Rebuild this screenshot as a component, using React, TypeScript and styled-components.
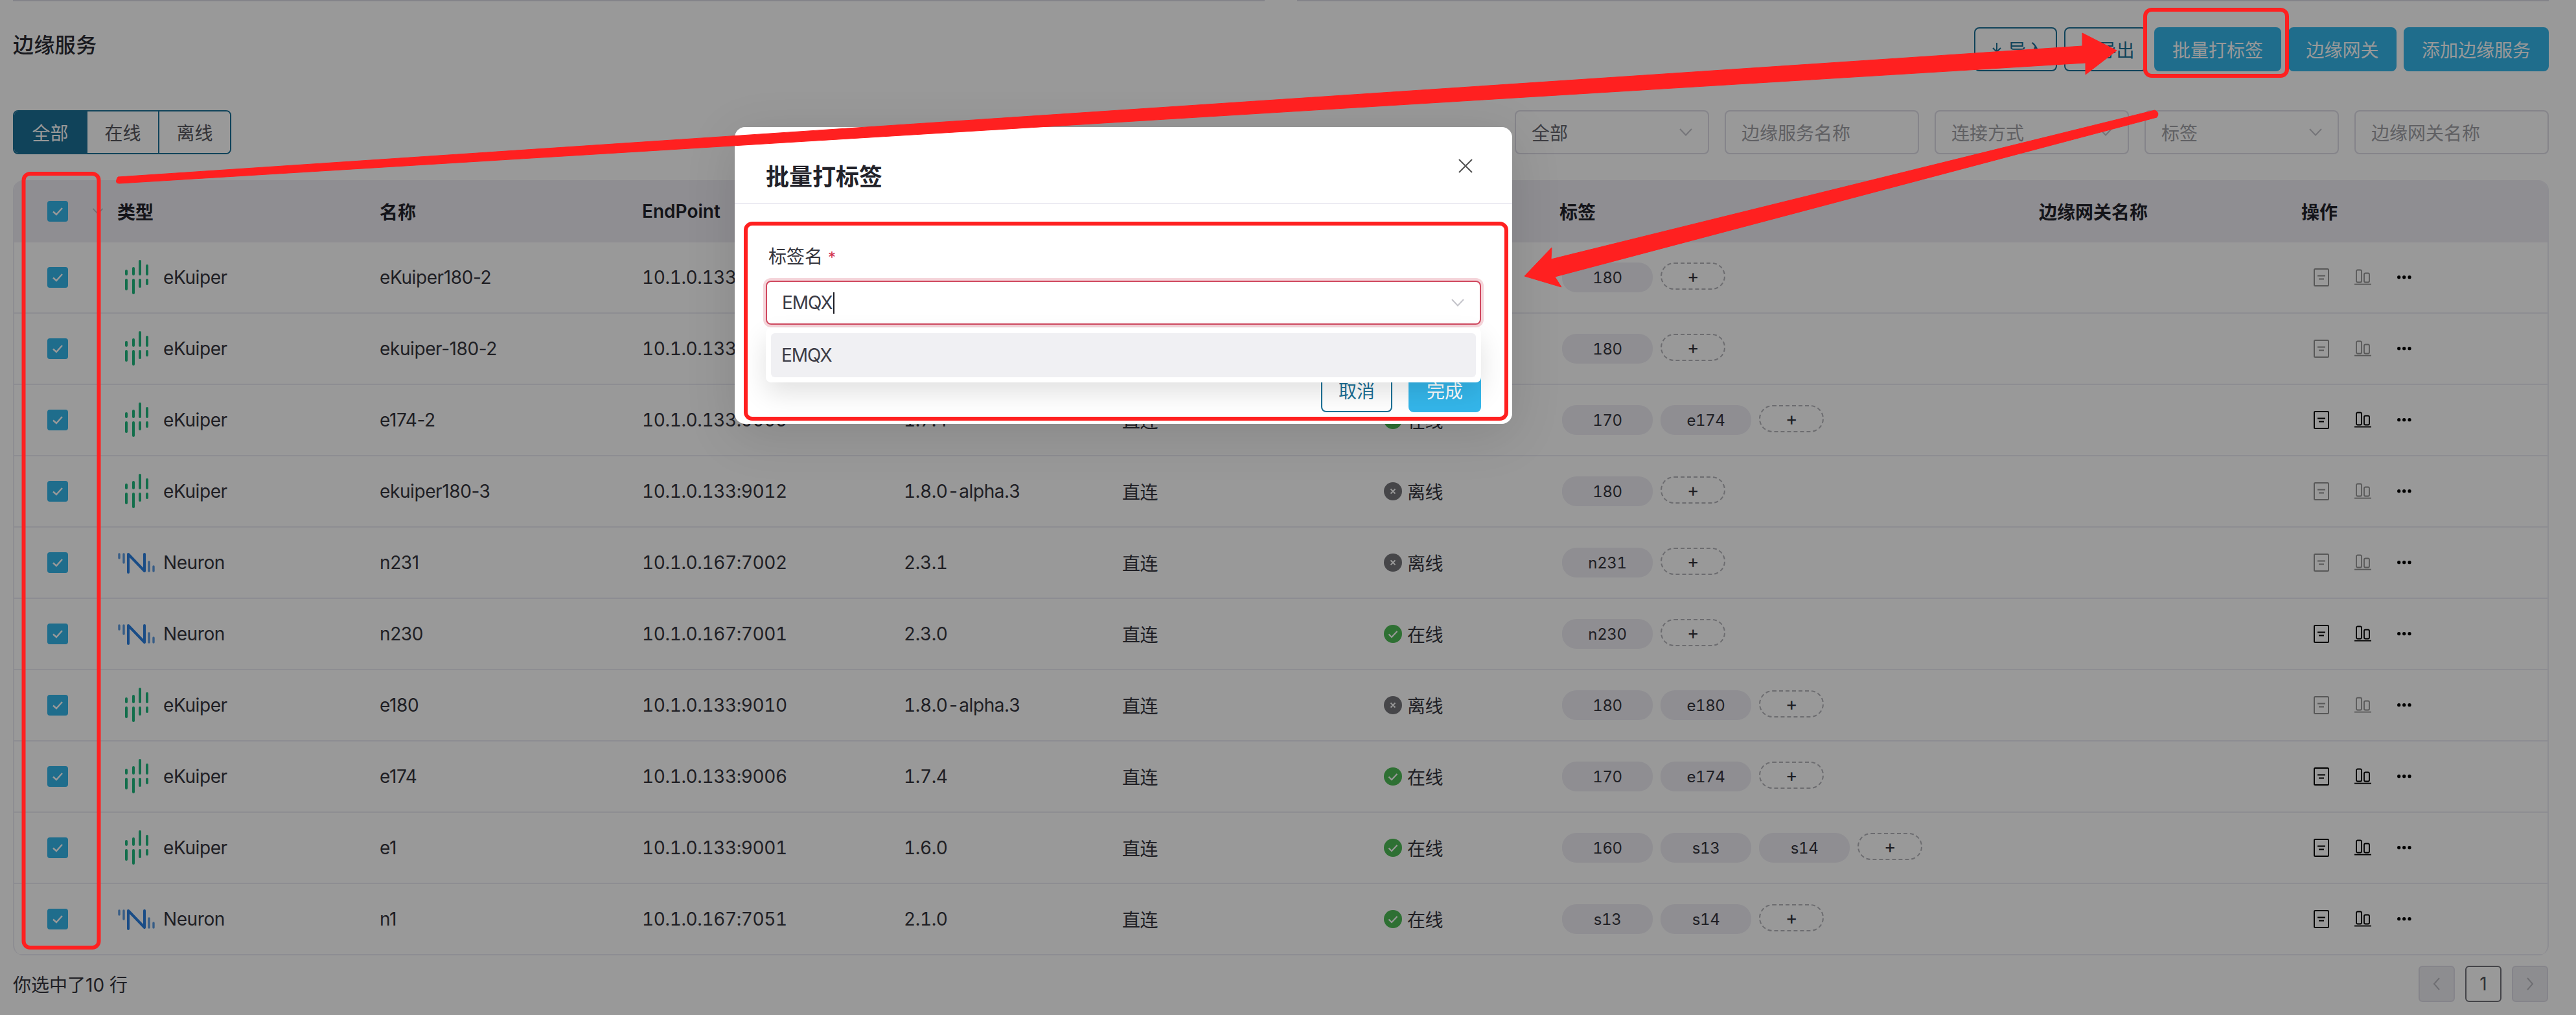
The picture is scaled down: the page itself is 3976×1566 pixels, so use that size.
import { ReactElement } from 'react';
import styled, { createGlobalStyle } from 'styled-components';

const GlobalStyle = createGlobalStyle`
  html, body {
    margin: 0;
    padding: 0;
    background: #fff;
    overflow: hidden;
  }
  body, button, input {
    font-family: Inter, "Noto Sans CJK SC", sans-serif;
  }
`;

const Page = styled.div`
  position: relative;
  box-sizing: border-box;
  width: 3976px;
  height: 1566px;
  padding: 0 42px 0 20px;
  font-size: 28px;
  color: #35353d;
  overflow: hidden;
`;

const TopCards = styled.div`
  display: flex;
  gap: 50px;
  height: 2px;
`;

const TopCard = styled.div`
  flex: 1;
  background: #ddddE4;
`;

const HeaderBar = styled.div`
  display: flex;
  justify-content: space-between;
  align-items: center;
  height: 68px;
  margin-top: 40px;
`;

const Title = styled.div`
  font-size: 32px;
  font-weight: 500;
  color: #2b2b33;
  margin-top: -18px;
  letter-spacing: 0.4px;
`;

const Toolbar = styled.div`
  display: flex;
  gap: 11px;
`;

const Button = styled.button<{ $outline?: boolean; $width: number }>`
  box-sizing: border-box;
  width: ${(p) => p.$width}px;
  height: 68px;
  padding: 0;
  font-size: 28px;
  border-radius: 8px;
  border: 2px solid ${(p) => (p.$outline ? '#1b7096' : '#34b6ea')};
  background: ${(p) => (p.$outline ? '#fff' : '#34b6ea')};
  color: ${(p) => (p.$outline ? '#1b7096' : '#fff')};
`;

const IconButton = styled(Button)`
  display: flex;
  align-items: center;
  justify-content: center;
  gap: 5px;
  padding-left: 4px;
  svg {
    width: 24px;
    height: 24px;
  }
`;

const FilterBar = styled.div`
  display: flex;
  justify-content: space-between;
  margin-top: 60px;
`;

const RadioGroup = styled.div`
  display: flex;
  height: 68px;
  border: 2px solid #1b7096;
  border-radius: 8px;
  box-sizing: border-box;
  overflow: hidden;
`;

const RadioItem = styled.div<{ $active?: boolean }>`
  box-sizing: border-box;
  width: 111px;
  display: flex;
  align-items: center;
  justify-content: center;
  background: ${(p) => (p.$active ? '#1b7096' : '#fff')};
  color: ${(p) => (p.$active ? '#fff' : '#55555d')};
  & + & {
    border-left: 2px solid #1b7096;
  }
`;

const Filters = styled.div`
  display: flex;
  gap: 24px;
`;

const FilterBox = styled.div<{ $value?: boolean }>`
  box-sizing: border-box;
  width: 300px;
  height: 68px;
  padding: 0 24px;
  display: flex;
  align-items: center;
  justify-content: space-between;
  border: 2px solid #dedde6;
  border-radius: 8px;
  color: ${(p) => (p.$value ? '#66666e' : '#a0a0a6')};
`;

const Table = styled.div`
  box-sizing: border-box;
  width: 3914px;
  margin-top: 40px;
  border: solid #ecebf3;
  border-width: 0 2px;
  border-radius: 16px;
  overflow: hidden;
`;

const HeadRow = styled.div`
  display: grid;
  grid-template-columns: 159px 405px 405px 404px 337px 403px 272px 740px 405px 380px;
  align-items: center;
  height: 96px;
  margin: 0 -2px;
  padding: 0 2px;
  background: #eeedf4;
  font-weight: 600;
  color: #22222a;
`;

const Row = styled.div`
  display: grid;
  grid-template-columns: 159px 405px 405px 404px 337px 403px 272px 740px 405px 380px;
  align-items: center;
  box-sizing: border-box;
  height: 110px;
  border-bottom: 2px solid #ecebf3;
  letter-spacing: -0.4px;
`;

const NumberCell = styled.div`
  font-variant-numeric: tabular-nums;
`;

const CheckCell = styled.div`
  display: flex;
  align-items: center;
  padding-left: 51px;
`;

const Checkbox = styled.div`
  width: 32px;
  height: 32px;
  border-radius: 4px;
  background: #34b6ea;
  display: flex;
  align-items: center;
  justify-content: center;
`;

const SortArrow = styled.svg`
  width: 18px;
  height: 10px;
  margin-left: 37px;
`;

const TypeCell = styled.div`
  display: flex;
  align-items: center;
  gap: 11px;
`;

const LogoSvg = styled.svg`
  width: 60px;
  height: 56px;
`;

const StatusCell = styled.div`
  display: flex;
  align-items: center;
  gap: 8px;
  padding-left: 1px;
`;

const StatusIcon = styled.svg`
  width: 28px;
  height: 28px;
`;

const Tags = styled.div`
  display: flex;
  align-items: flex-start;
  gap: 12px;
  margin-left: 4px;
`;

const Tag = styled.div`
  width: 140px;
  height: 46px;
  border-radius: 22px;
  background: #eeedf4;
  font-size: 24px;
  font-variant-numeric: tabular-nums;
  display: flex;
  align-items: center;
  justify-content: center;
`;

const AddTag = styled.div`
  box-sizing: border-box;
  width: 100px;
  height: 42px;
  border: 2px dashed #b4b4ba;
  border-radius: 21px;
  display: flex;
  align-items: center;
  justify-content: center;
`;

const Actions = styled.div<{ $disabled: boolean }>`
  display: flex;
  gap: 38px;
  padding-left: 18px;
  color: #000;
  svg {
    width: 26px;
    height: 32px;
    display: block;
  }
  .act {
    opacity: ${(p) => (p.$disabled ? 0.42 : 1)};
  }
`;

const Footer = styled.div`
  display: flex;
  justify-content: space-between;
  align-items: center;
  margin-top: 16px;
`;

const Pager = styled.div`
  display: flex;
  gap: 16px;
  margin-right: 1px;
`;

const PageButton = styled.div<{ $current?: boolean }>`
  box-sizing: border-box;
  width: 56px;
  height: 56px;
  border-radius: 6px;
  display: flex;
  align-items: center;
  justify-content: center;
  border: 2px solid ${(p) => (p.$current ? '#707078' : '#dedde6')};
  background: ${(p) => (p.$current ? 'transparent' : '#ecebf1')};
  color: #55555d;
`;

const Mask = styled.div`
  position: absolute;
  inset: 0;
  background: rgba(0, 0, 0, 0.4);
`;

const Modal = styled.div`
  position: absolute;
  left: 1134px;
  top: 196px;
  width: 1200px;
  height: 458px;
  background: #fff;
  border-radius: 16px;
  box-shadow: 0 16px 80px rgba(0, 0, 0, 0.12);
`;

const ModalHead = styled.div`
  box-sizing: border-box;
  height: 119px;
  padding: 49px 61px 0 48px;
  display: flex;
  justify-content: space-between;
  align-items: flex-start;
  border-bottom: 2px solid #ecebf3;
`;

const ModalTitle = styled.div`
  font-size: 36px;
  line-height: 36px;
  font-weight: 600;
  color: #22222a;
  margin-top: 10px;
`;

const CloseIcon = styled.svg`
  width: 22px;
  height: 22px;
`;

const ModalBody = styled.div`
  position: relative;
  padding: 61px 48px 0;
`;

const FieldLabel = styled.div`
  line-height: 40px;
  color: #35353d;
  margin-left: 4px;
`;

const Required = styled.span`
  color: #d0304f;
  margin-left: 8px;
  font-size: 24px;
`;

const SelectBox = styled.div`
  box-sizing: border-box;
  height: 68px;
  margin-top: 15px;
  padding: 0 24px 0 23px;
  display: flex;
  align-items: center;
  justify-content: space-between;
  border: 2px solid #d0485f;
  border-radius: 8px;
  box-shadow: 0 0 0 4px #f5d5da;
`;

const SelectValue = styled.div`
  display: flex;
  align-items: center;
  color: #3c3c46;
  letter-spacing: -1px;
`;

const Caret = styled.span`
  width: 2px;
  height: 33px;
  margin-left: 1px;
  background: #1b1b22;
`;

const Chevron = styled.svg`
  width: 20px;
  height: 12px;
`;

const ModalFoot = styled.div`
  display: flex;
  justify-content: flex-end;
  gap: 25px;
  margin-top: 67px;
`;

const DropMenu = styled.div`
  position: absolute;
  left: 48px;
  right: 48px;
  top: 191px;
  box-sizing: border-box;
  height: 84px;
  padding: 8px;
  background: #fff;
  border-radius: 8px;
  box-shadow: 0 16px 40px rgba(0, 0, 0, 0.12);
`;

const DropItem = styled.div`
  height: 68px;
  padding-left: 16px;
  display: flex;
  align-items: center;
  border-radius: 6px;
  background: #f0f0f3;
  color: #3c3c46;
  letter-spacing: -1px;
`;

const Notes = styled.svg`
  position: absolute;
  left: 0;
  top: 0;
  width: 3976px;
  height: 1566px;
  pointer-events: none;
`;

interface Service {
  type: 'eKuiper' | 'Neuron';
  name: string;
  endpoint: string;
  version: string;
  online: boolean;
  tags: string[];
}

const services: Service[] = [
  { type: 'eKuiper', name: 'eKuiper180-2', endpoint: '10.1.0.133:9011', version: '1.8.0-alpha.3', online: false, tags: ['180'] },
  { type: 'eKuiper', name: 'ekuiper-180-2', endpoint: '10.1.0.133:9013', version: '1.8.0-alpha.3', online: false, tags: ['180'] },
  { type: 'eKuiper', name: 'e174-2', endpoint: '10.1.0.133:9005', version: '1.7.4', online: true, tags: ['170', 'e174'] },
  { type: 'eKuiper', name: 'ekuiper180-3', endpoint: '10.1.0.133:9012', version: '1.8.0-alpha.3', online: false, tags: ['180'] },
  { type: 'Neuron', name: 'n231', endpoint: '10.1.0.167:7002', version: '2.3.1', online: false, tags: ['n231'] },
  { type: 'Neuron', name: 'n230', endpoint: '10.1.0.167:7001', version: '2.3.0', online: true, tags: ['n230'] },
  { type: 'eKuiper', name: 'e180', endpoint: '10.1.0.133:9010', version: '1.8.0-alpha.3', online: false, tags: ['180', 'e180'] },
  { type: 'eKuiper', name: 'e174', endpoint: '10.1.0.133:9006', version: '1.7.4', online: true, tags: ['170', 'e174'] },
  { type: 'eKuiper', name: 'e1', endpoint: '10.1.0.133:9001', version: '1.6.0', online: true, tags: ['160', 's13', 's14'] },
  { type: 'Neuron', name: 'n1', endpoint: '10.1.0.167:7051', version: '2.1.0', online: true, tags: ['s13', 's14'] }
];

const Check = (): ReactElement => (
  <svg width="20" height="16" viewBox="0 0 20 16" fill="none">
    <path d="M3 8.5 L8 13 L17 3" stroke="#fff" strokeWidth="2.4" />
  </svg>
);

const ChevronPath = ({ color }: { color: string }): ReactElement => (
  <path d="M1 1 L10 10.5 L19 1" fill="none" stroke={color} strokeWidth="2" />
);

const EkuiperLogo = (): ReactElement => (
  <LogoSvg viewBox="0 0 60 56" fill="none" stroke="#1eb87d" strokeWidth="4" strokeLinecap="round">
    <path d="M14 18 V23 M14 32 V46" />
    <path d="M25 14 V23 M25 32 V52" />
    <path d="M35 3 V23 M35 32 V42" />
    <path d="M46 10 V23 M46 32 V38" />
  </LogoSvg>
);

const NeuronLogo = (): ReactElement => (
  <LogoSvg viewBox="0 0 60 56" fill="none" strokeLinecap="round">
    <g stroke="#5d9be0" strokeWidth="3.4">
      <path d="M3 15 V21 M10 15 V28" />
      <path d="M49 27 V41 M56 34 V41" />
    </g>
    <path d="M17 43 V15 L42 41 V15" stroke="#2a7fe0" strokeWidth="4" strokeLinejoin="round" />
  </LogoSvg>
);

const OnlineIcon = (): ReactElement => (
  <StatusIcon viewBox="0 0 28 28">
    <circle cx="14" cy="14" r="14" fill="#4dbb55" />
    <path d="M7.5 14.5 L12 19 L20.5 10" fill="none" stroke="#fff" strokeWidth="2.2" />
  </StatusIcon>
);

const OfflineIcon = (): ReactElement => (
  <StatusIcon viewBox="0 0 28 28">
    <circle cx="14" cy="14" r="14" fill="#76767b" />
    <path d="M10.5 10.5 L17.5 17.5 M17.5 10.5 L10.5 17.5" fill="none" stroke="#fff" strokeWidth="1.8" />
  </StatusIcon>
);

const RowActions = ({ disabled }: { disabled: boolean }): ReactElement => (
  <Actions $disabled={disabled}>
    <svg className="act" viewBox="0 0 26 32" fill="none" stroke="currentColor" strokeWidth="2">
      <rect x="2" y="3" width="22" height="26" rx="1.5" />
      <path d="M7 13.6 H19 M9 18.6 H17" />
    </svg>
    <svg className="act" viewBox="0 0 26 32" fill="none" stroke="currentColor" strokeWidth="1.8">
      <rect x="3" y="4.5" width="8" height="19" rx="2" />
      <rect x="15" y="9.5" width="8" height="14" rx="2" />
      <path d="M0 26.6 H26" />
    </svg>
    <svg viewBox="0 0 26 32" fill="currentColor">
      <circle cx="4.7" cy="15.7" r="2.6" />
      <circle cx="12.7" cy="15.7" r="2.6" />
      <circle cx="21" cy="15.7" r="2.6" />
    </svg>
  </Actions>
);

const Annotations = (): ReactElement => (
  <Notes viewBox="0 0 3976 1566">
    <g fill="none" stroke="#ff2020" strokeWidth="6">
      <rect x="36.5" y="268" width="116" height="1194" rx="10" />
      <rect x="3311" y="15" width="219" height="102" rx="10" />
      <rect x="1151" y="345" width="1174" height="301" rx="10" />
    </g>
    <g fill="#ff2020" stroke="#ff2020" strokeWidth="1" strokeLinejoin="round">
      <path d="M182 273 L3214 71 L3214 51 L3267 78 L3219 115 L3219 97 L184 283 Q176 283 182 273 Z" />
      <path d="M2353 426 L2395 382 L2394 400 L3326 170 Q3334 174 3329 181 L2400 427 L2410 443 Z" />
    </g>
  </Notes>
);

const App = (): ReactElement => {
  return (
    <Page>
      <GlobalStyle />
      <TopCards>
        <TopCard />
        <TopCard />
      </TopCards>
      <HeaderBar>
        <Title>边缘服务</Title>
        <Toolbar>
          <IconButton $outline $width={128}>
            <svg viewBox="0 0 24 24" fill="none" stroke="currentColor" strokeWidth="2">
              <path d="M12 2 V16 M6 10 L12 16 L18 10 M4 22 H20" />
            </svg>
            导入
          </IconButton>
          <IconButton $outline $width={128}>
            <svg viewBox="0 0 24 24" fill="none" stroke="currentColor" strokeWidth="2">
              <path d="M12 16 V2 M6 8 L12 2 L18 8 M4 22 H20" />
            </svg>
            导出
          </IconButton>
          <Button $width={196}>批量打标签</Button>
          <Button $width={167}>边缘网关</Button>
          <Button $width={224}>添加边缘服务</Button>
        </Toolbar>
      </HeaderBar>
      <FilterBar>
        <RadioGroup>
          <RadioItem $active>全部</RadioItem>
          <RadioItem>在线</RadioItem>
          <RadioItem>离线</RadioItem>
        </RadioGroup>
        <Filters>
          <FilterBox $value>
            全部
            <Chevron viewBox="0 0 20 12"><ChevronPath color="#c4c4ca" /></Chevron>
          </FilterBox>
          <FilterBox>边缘服务名称</FilterBox>
          <FilterBox>
            连接方式
            <Chevron viewBox="0 0 20 12"><ChevronPath color="#c4c4ca" /></Chevron>
          </FilterBox>
          <FilterBox>
            标签
            <Chevron viewBox="0 0 20 12"><ChevronPath color="#c4c4ca" /></Chevron>
          </FilterBox>
          <FilterBox>边缘网关名称</FilterBox>
        </Filters>
      </FilterBar>
      <Table>
        <HeadRow>
          <CheckCell>
            <Checkbox><Check /></Checkbox>
            <SortArrow viewBox="0 0 20 12"><ChevronPath color="#b8b8be" /></SortArrow>
          </CheckCell>
          <div>类型</div>
          <div>名称</div>
          <div>EndPoint</div>
          <div>版本</div>
          <div>连接方式</div>
          <div>状态</div>
          <div>标签</div>
          <div>边缘网关名称</div>
          <div>操作</div>
        </HeadRow>
        {services.map((service) => (
          <Row key={service.name}>
            <CheckCell>
              <Checkbox><Check /></Checkbox>
            </CheckCell>
            <TypeCell>
              {service.type === 'eKuiper' ? <EkuiperLogo /> : <NeuronLogo />}
              {service.type}
            </TypeCell>
            <div>{service.name}</div>
            <NumberCell>{service.endpoint}</NumberCell>
            <NumberCell>{service.version}</NumberCell>
            <div>直连</div>
            <StatusCell>
              {service.online ? <OnlineIcon /> : <OfflineIcon />}
              {service.online ? '在线' : '离线'}
            </StatusCell>
            <Tags>
              {service.tags.map((tag) => <Tag key={tag}>{tag}</Tag>)}
              <AddTag>+</AddTag>
            </Tags>
            <div />
            <RowActions disabled={!service.online} />
          </Row>
        ))}
      </Table>
      <Footer>
        <div>你选中了10 行</div>
        <Pager>
          <PageButton>
            <svg width="12" height="20" viewBox="0 0 12 20" fill="none">
              <path d="M10 1 L2 10 L10 19" stroke="#b8b8be" strokeWidth="2" />
            </svg>
          </PageButton>
          <PageButton $current>1</PageButton>
          <PageButton>
            <svg width="12" height="20" viewBox="0 0 12 20" fill="none">
              <path d="M2 1 L10 10 L2 19" stroke="#b8b8be" strokeWidth="2" />
            </svg>
          </PageButton>
        </Pager>
      </Footer>
      <Mask />
      <Modal>
        <ModalHead>
          <ModalTitle>批量打标签</ModalTitle>
          <CloseIcon viewBox="0 0 22 22">
            <path d="M1 1 L21 21 M21 1 L1 21" fill="none" stroke="#5a5a5a" strokeWidth="2.2" />
          </CloseIcon>
        </ModalHead>
        <ModalBody>
          <FieldLabel>
            标签名
            <Required>*</Required>
          </FieldLabel>
          <SelectBox>
            <SelectValue>
              EMQX
              <Caret />
            </SelectValue>
            <Chevron viewBox="0 0 20 12"><ChevronPath color="#c4c4ca" /></Chevron>
          </SelectBox>
          <ModalFoot>
            <Button $outline $width={110}>取消</Button>
            <Button $width={112}>完成</Button>
          </ModalFoot>
          <DropMenu>
            <DropItem>EMQX</DropItem>
          </DropMenu>
        </ModalBody>
      </Modal>
      <Annotations />
    </Page>
  );
};

export default App;
